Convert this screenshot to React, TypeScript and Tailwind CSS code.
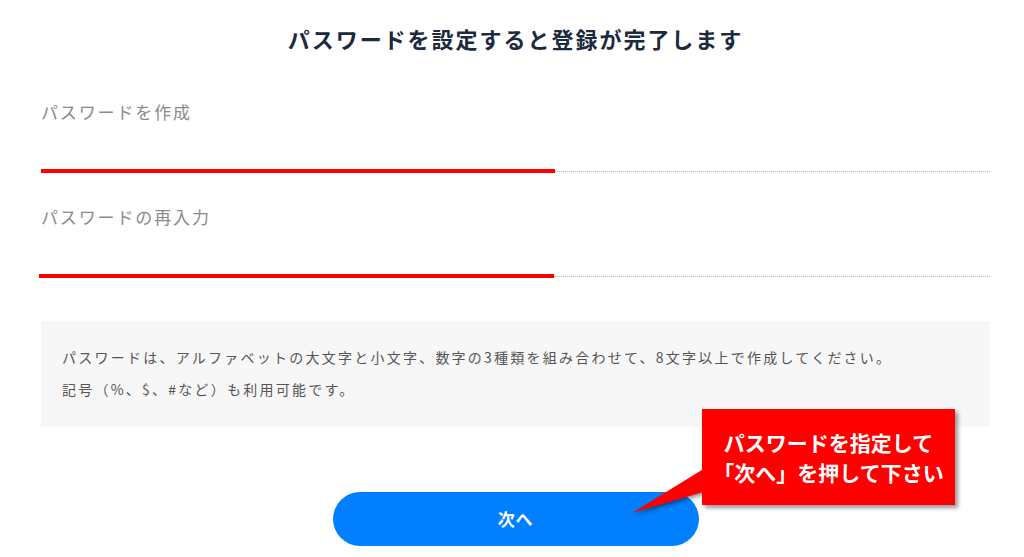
const JP = "font-['Noto_Sans_CJK_JP','Noto_Sans',sans-serif]";

function Field({ label, redClass }: { label: string; redClass: string }) {
  return (
    <div>
      <div className="text-[17px] leading-6 tracking-[0.11em] text-[#8a8a8a]">{label}</div>
      <div className="h-[45px]" />
      <div className="flex h-[4px] items-center">
        <div className={`h-[4px] bg-[#ff0000] ${redClass}`} />
        <div className="flex-1 border-t border-dotted border-[#b5b5b5]" />
      </div>
    </div>
  );
}

export default function App() {
  return (
    <div className={`relative h-[557px] w-[1024px] overflow-hidden bg-white ${JP}`}>
      <div className="pl-[41px] pr-[34px] pt-[23px]">
        <h1 className="text-center text-[22px] font-bold leading-[30px] tracking-[0.09em] text-[#1b2a3e]">
          パスワードを設定すると登録が完了します
        </h1>

        <div className="mt-[47px]">
          <Field label="パスワードを作成" redClass="w-[514px]" />
        </div>
        <div className="mt-[32px]">
          <Field label="パスワードの再入力" redClass="-ml-[2px] w-[515px]" />
        </div>

        <div className="mt-[43px] h-[106px] bg-[#f7f7f7] pl-[21px] pt-[20px] text-[14px] leading-[32px] tracking-[0.16em] text-[#555]">
          <p>パスワードは、アルファベットの大文字と小文字、数字の3種類を組み合わせて、8文字以上で作成してください。</p>
          <p>記号（%、$、#など）も利用可能です。</p>
        </div>

        <div className="mt-[65px] flex justify-center">
          <button
            type="button"
            className="h-[54px] w-[366px] rounded-full bg-[#0080ff] text-[17px] font-bold tracking-[0.05em] text-white"
          >
            次へ
          </button>
        </div>
      </div>

      {/* callout annotation */}
      <svg
        className="absolute left-[625px] top-[458px] drop-shadow-[2px_2px_2px_rgba(0,0,0,0.45)]"
        width="90"
        height="62"
        viewBox="0 0 90 62"
      >
        <polygon points="7,55 85,7 85,32" fill="#ff0000" />
      </svg>
      <div className="absolute left-[702px] top-[409px] flex h-[96px] w-[253px] flex-col items-center justify-center bg-[#ff0000] text-[21px] font-bold leading-[30px] text-white shadow-[3px_3px_4px_rgba(0,0,0,0.4)]">
        <span>パスワードを指定して</span>
        <span>「次へ」を押して下さい</span>
      </div>
    </div>
  );
}
